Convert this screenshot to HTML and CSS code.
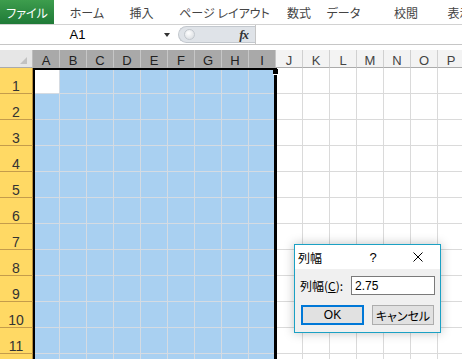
FILE: index.html
```html
<!DOCTYPE html>
<html lang="ja">
<head>
    <meta charset="UTF-8">
    <title>列幅</title>
    <link rel="stylesheet" href="styles.css">
</head>
<body>
    <nav class="ribbon">
        <a class="tab file">ファイル</a>
        <a class="tab">ホーム</a>
        <a class="tab">挿入</a>
        <a class="tab">ページ レイアウト</a>
        <a class="tab">数式</a>
        <a class="tab">データ</a>
        <a class="tab">校閲</a>
        <a class="tab">表示</a>
    </nav>

    <div class="formula">
        <div class="namebox"><span class="ref">A1</span><span class="caret"></span></div>
        <div class="pill"><span class="knob"></span><span class="fx">fx</span></div>
        <div class="entry"></div>
    </div>
    <div class="gap"></div>

    <div class="sheet">
        <div class="corner"><span class="tri"></span></div>
        <div class="colheads">
            <div class="ch sel">A</div>
            <div class="ch sel">B</div>
            <div class="ch sel">C</div>
            <div class="ch sel">D</div>
            <div class="ch sel">E</div>
            <div class="ch sel">F</div>
            <div class="ch sel">G</div>
            <div class="ch sel">H</div>
            <div class="ch sel">I</div>
            <div class="ch">J</div>
            <div class="ch">K</div>
            <div class="ch">L</div>
            <div class="ch">M</div>
            <div class="ch">N</div>
            <div class="ch">O</div>
            <div class="ch">P</div>
        </div>
        <div class="rowheads">
            <div class="rh">1</div>
            <div class="rh">2</div>
            <div class="rh">3</div>
            <div class="rh">4</div>
            <div class="rh">5</div>
            <div class="rh">6</div>
            <div class="rh">7</div>
            <div class="rh">8</div>
            <div class="rh">9</div>
            <div class="rh">10</div>
            <div class="rh">11</div>
            <div class="rh"></div>
        </div>
        <div class="cells">
            <div class="col sel"><div class="active"></div></div>
            <div class="col sel"></div>
            <div class="col sel"></div>
            <div class="col sel"></div>
            <div class="col sel"></div>
            <div class="col sel"></div>
            <div class="col sel"></div>
            <div class="col sel"></div>
            <div class="col sel"></div>
            <div class="col"></div>
            <div class="col"></div>
            <div class="col"></div>
            <div class="col"></div>
            <div class="col"></div>
            <div class="col"></div>
            <div class="col"></div>

            <div class="selection"><span class="handle"></span></div>

            <div class="dialog">
                <div class="titlebar">
                    <span class="title">列幅</span>
                    <span class="help">?</span>
                    <svg class="close" viewBox="0 0 10 10"><path d="M0.5 0.5 L9.5 9.5 M9.5 0.5 L0.5 9.5" stroke="#000" stroke-width="1"/></svg>
                </div>
                <div class="body">
                    <div class="field">
                        <span class="label">列幅(<u>C</u>):</span>
                        <span class="input">2.75</span>
                    </div>
                    <div class="buttons">
                        <span class="btn ok">OK</span>
                        <span class="btn cancel">キャンセル</span>
                    </div>
                </div>
            </div>
        </div>
    </div>
</body>
</html>
```

FILE: styles.css
```css
body {
    margin: 0;
    width: 462px;
    height: 359px;
    overflow: hidden;
    background: #fff;
    font-family: "Noto Sans CJK JP", sans-serif;
}

/* ribbon tabs */
.ribbon {
    display: grid;
    grid-template-columns: 54px 66px 43px 123px 26px 63px 62px 45px;
    height: 24px;
    border-bottom: 1px solid #d2d2d2;
    font-size: 12px;
    color: #444;
    font-feature-settings: "palt";
}
.tab {
    display: flex;
    align-items: center;
    justify-content: center;
    white-space: nowrap;
}
.file {
    background: linear-gradient(#3d9d4d, #1f7a37);
    color: #fff;
}

/* formula bar */
.formula {
    display: flex;
    align-items: center;
    height: 19px;
    border-bottom: 1px solid #c6c6c6;
    font-family: "Liberation Sans", sans-serif;
}
.namebox {
    flex: 0 0 176px;
    display: flex;
    align-items: center;
    height: 100%;
}
.ref {
    flex: 0 0 155px;
    text-align: center;
    font-size: 13px;
    color: #000;
}
.caret {
    margin-left: 9px;
    border-top: 4px solid #333;
    border-left: 3px solid transparent;
    border-right: 3px solid transparent;
}
.pill {
    margin-left: 2px;
    flex: 0 0 77px;
    height: 17px;
    box-sizing: border-box;
    display: flex;
    align-items: center;
    background: #dfe3e8;
    border: 1px solid #c3c8ce;
    border-right: 0;
    border-radius: 9px 0 0 9px;
}
.knob {
    width: 9px;
    height: 9px;
    margin-left: 5px;
    border-radius: 50%;
    background: radial-gradient(circle at 40% 35%, #fff, #d3d7dc);
    border: 1px solid #c2c7cd;
}
.fx {
    margin-left: auto;
    margin-right: 7px;
    font: italic bold 13px "Liberation Serif", serif;
    letter-spacing: -1px;
    color: #333;
}
.entry {
    flex: 1;
    height: 100%;
    border-left: 1px solid #c6c6c6;
    background: #fff;
}
.gap {
    height: 5px;
}

/* sheet */
.sheet {
    display: grid;
    grid-template-columns: 33px 1fr;
    grid-template-rows: 18px 1fr;
    height: 309px;
    overflow: hidden;
    font-family: "Liberation Sans", sans-serif;
}
.corner {
    box-sizing: border-box;
    display: flex;
    align-items: flex-end;
    justify-content: flex-end;
    padding: 0 5px 3px 0;
    background: #e6e6e6;
    border-right: 1px solid #bdbdbd;
    border-bottom: 1px solid #ababab;
}
.tri {
    border-left: 7px solid transparent;
    border-bottom: 7px solid #c2c2c2;
}
.colheads {
    display: flex;
    overflow: hidden;
}
.ch {
    flex: 0 0 27px;
    box-sizing: border-box;
    display: flex;
    align-items: flex-end;
    justify-content: center;
    background: #f3f3f3;
    border-right: 1px solid #d0d0d0;
    border-bottom: 1px solid #ababab;
    color: #444;
    font-size: 13px;
    line-height: 13px;
}
.ch.sel {
    background: #a9a9a9;
    border-right-color: #c6c6c6;
    color: #222;
}
.rowheads {
    display: flex;
    flex-direction: column;
    overflow: hidden;
}
.rh {
    flex: 0 0 26px;
    box-sizing: border-box;
    display: flex;
    align-items: flex-end;
    justify-content: center;
    background: #ffd964;
    border-right: 1px solid #b58b3a;
    border-bottom: 1px solid #c49c4b;
    color: #333;
    font-size: 14px;
    line-height: 14px;
}
.cells {
    position: relative;
    display: flex;
    overflow: hidden;
}
.col {
    flex: 0 0 27px;
    box-sizing: border-box;
    border-right: 1px solid #dadada;
    background-image: repeating-linear-gradient(to bottom, transparent 0 25px, #dadada 25px 26px);
}
.col.sel {
    background-color: #a9d0f1;
    border-right-color: #d5dbe2;
    background-image: repeating-linear-gradient(to bottom, transparent 0 25px, #d5dbe2 25px 26px);
}
.active {
    height: 25px;
    background: #fff;
}
.selection {
    position: absolute;
    left: 0;
    top: 0;
    width: 244px;
    height: 400px;
    box-sizing: border-box;
    border: 2px solid #000;
    border-right-width: 3px;
    border-bottom: 0;
}
.handle {
    position: absolute;
    left: 238px;
    top: -1px;
    width: 5px;
    height: 5px;
    background: #000;
    border-bottom: 1px solid #fff;
}

/* column width dialog */
.dialog {
    position: absolute;
    left: 261px;
    top: 176px;
    width: 147px;
    height: 89px;
    box-sizing: border-box;
    border: 1px solid #1ba1c4;
    background: #f0f0f0;
    box-shadow: 0 0 10px rgba(0, 0, 0, 0.25);
    font-family: "Noto Sans CJK JP", sans-serif;
    font-size: 12px;
    font-feature-settings: "palt";
    color: #000;
}
.titlebar {
    display: flex;
    align-items: center;
    height: 24px;
    padding-left: 3px;
    background: #fff;
}
.title {
    flex: 1;
}
.help {
    width: 10px;
    margin-right: 35px;
    text-align: center;
    font-family: "Liberation Sans", sans-serif;
    font-size: 13px;
}
.close {
    width: 10px;
    height: 10px;
    margin-right: 17px;
}
.body {
    padding: 7px 0 0 5px;
}
.field {
    display: flex;
    align-items: center;
    height: 19px;
}
.label {
    width: 51px;
    white-space: nowrap;
}
.input {
    width: 84px;
    height: 19px;
    box-sizing: border-box;
    display: flex;
    align-items: center;
    padding-left: 3px;
    background: #fff;
    border: 1px solid #7a7a7a;
    font-family: "Liberation Sans", sans-serif;
}
.buttons {
    display: flex;
    gap: 8px;
    margin: 10px 0 0 1px;
}
.btn {
    height: 20px;
    box-sizing: border-box;
    display: flex;
    align-items: center;
    justify-content: center;
    background: #e1e1e1;
    border: 1px solid #adadad;
}
.ok {
    width: 63px;
    border: 2px solid #0078d7;
    font-family: "Liberation Sans", sans-serif;
}
.cancel {
    width: 62px;
}
```
